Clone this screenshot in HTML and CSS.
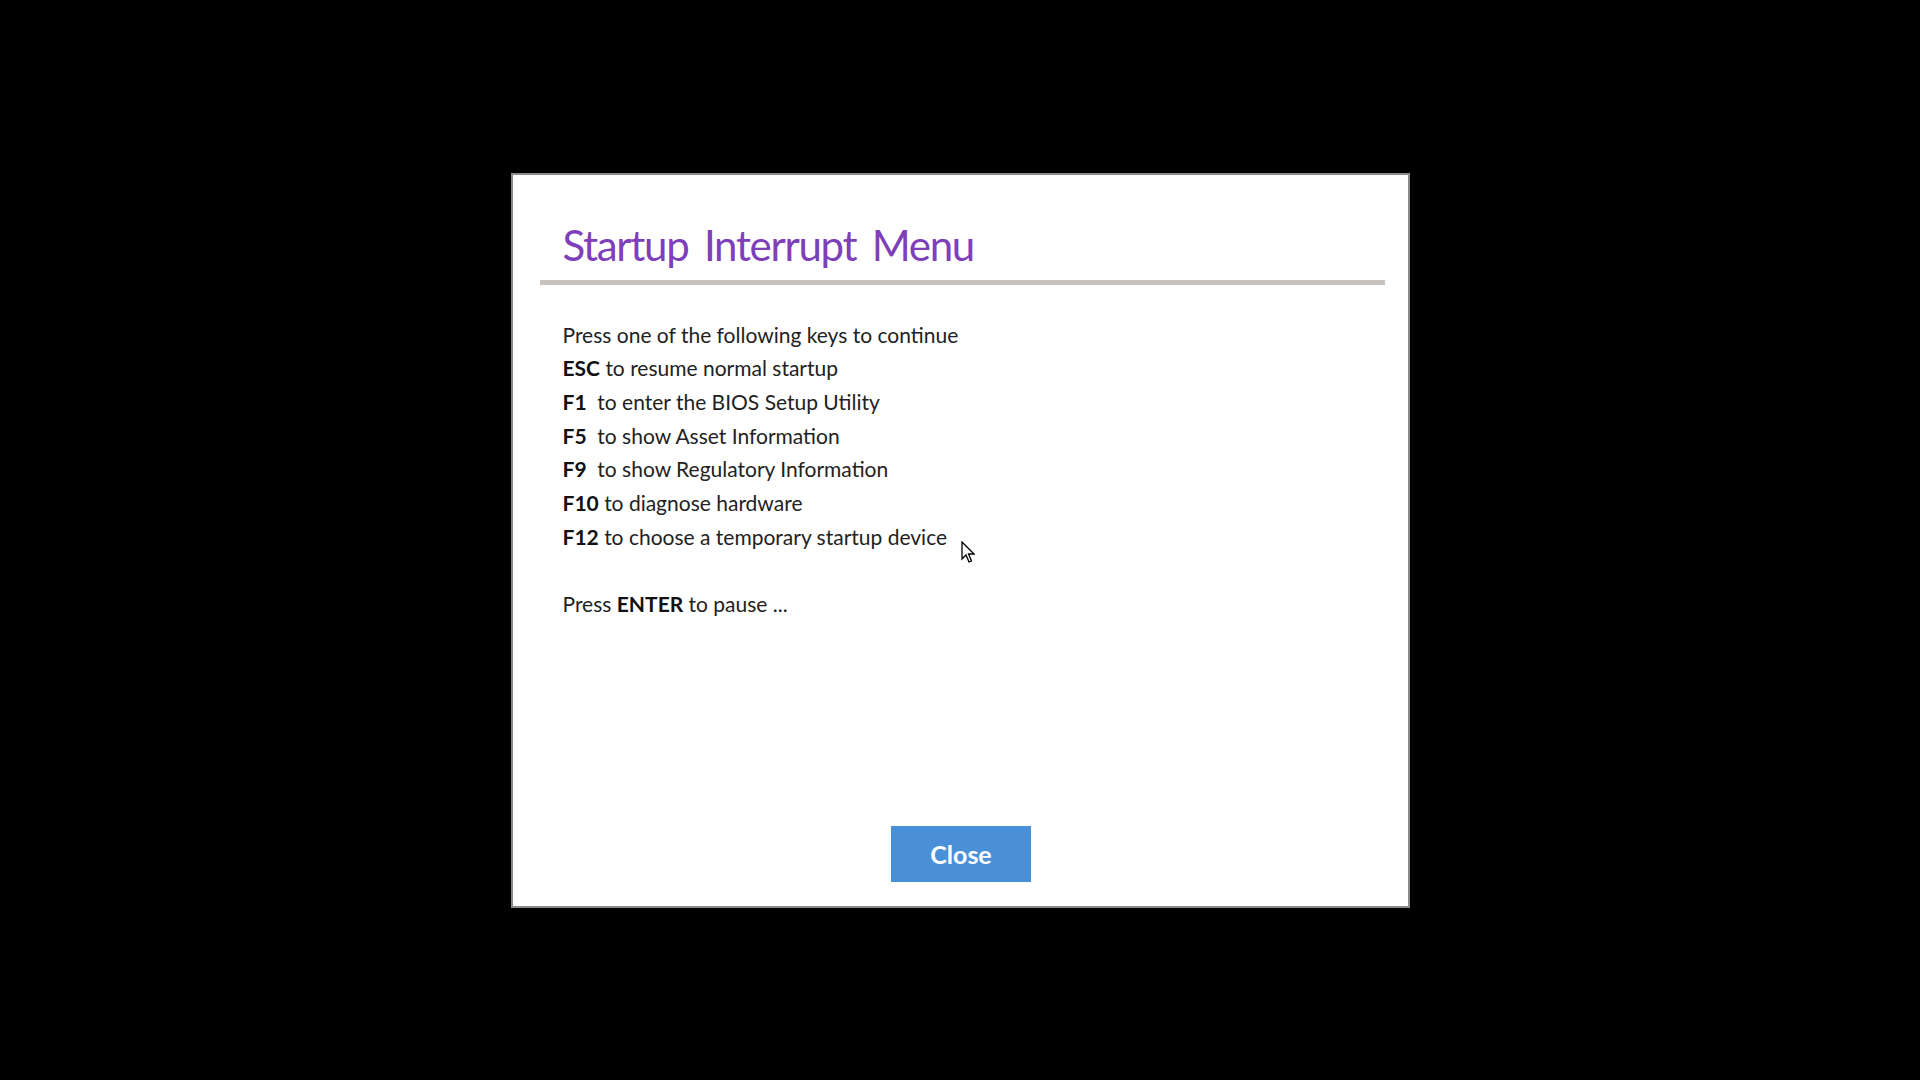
FILE: index.html
```html
<!DOCTYPE html>
<html lang="en">
<head>
<meta charset="utf-8">
<title>Startup Interrupt Menu</title>
<link rel="stylesheet" href="styles.css">
</head>
<body>
<div class="screen">
  <div class="dialog">
    <div class="header">
      <h1 class="title">Startup Interrupt Menu</h1>
    </div>
    <div class="content">
      <div class="line">Press one of the following keys to continue</div>
      <div class="line"><b>ESC</b> to resume normal startup</div>
      <div class="line"><b>F1</b>&nbsp; to enter the BIOS Setup Utility</div>
      <div class="line"><b>F5</b>&nbsp; to show Asset Information</div>
      <div class="line"><b>F9</b>&nbsp; to show Regulatory Information</div>
      <div class="line"><b>F10</b> to diagnose hardware</div>
      <div class="line"><b>F12</b> to choose a temporary startup device</div>
      <div class="line blank"></div>
      <div class="line">Press <b>ENTER</b> to pause ...</div>
    </div>
    <div class="footer">
      <button class="close-btn">Close</button>
    </div>
    <svg class="cursor" width="14" height="23" viewBox="0 0 14 23">
      <path d="M1 1 L1 18 L5 14 L8 21 L10.5 20 L7.5 13 L13 13 Z" fill="#fff" stroke="#000" stroke-width="1.3" stroke-linejoin="miter"/>
    </svg>
  </div>
</div>
</body>
</html>
```

FILE: styles.css
```css
html, body {
  margin: 0;
  padding: 0;
  background: #000;
}
.screen {
  width: 1920px;
  height: 1080px;
  display: flex;
  align-items: center;
  justify-content: center;
}
.dialog {
  position: relative;
  box-sizing: border-box;
  width: 899px;
  height: 735px;
  background: #fff;
  border: 2px solid #8a8a8a;
  display: flex;
  flex-direction: column;
  font-family: "Lato", "Open Sans", sans-serif;
}
.header {
  margin: 45px 23px 0 27px;
  border-bottom: 5px solid #c9c2bd;
  padding-bottom: 10px;
}
.title {
  margin: 0;
  padding-left: 23px;
  font-size: 42px;
  line-height: 50px;
  font-weight: 400;
  color: #7e3fba;
  letter-spacing: -1.3px;
  word-spacing: 6px;
}
.content {
  margin-top: 33px;
  padding-left: 50px;
  font-size: 21px;
  color: #222;
}
.line {
  height: 33.7px;
  line-height: 33.7px;
  white-space: nowrap;
}
.line b {
  font-weight: 700;
  color: #111;
}
.footer {
  margin-top: auto;
  padding-bottom: 24px;
  display: flex;
  justify-content: center;
}
.close-btn {
  width: 140px;
  height: 56px;
  border: none;
  background: #4a90d9;
  color: #fff;
  font-family: "Lato", "Open Sans", sans-serif;
  font-size: 25px;
  font-weight: 700;
  padding: 0;
  margin-left: 2px;
}
.cursor {
  position: absolute;
  left: 448px;
  top: 366px;
}
```
